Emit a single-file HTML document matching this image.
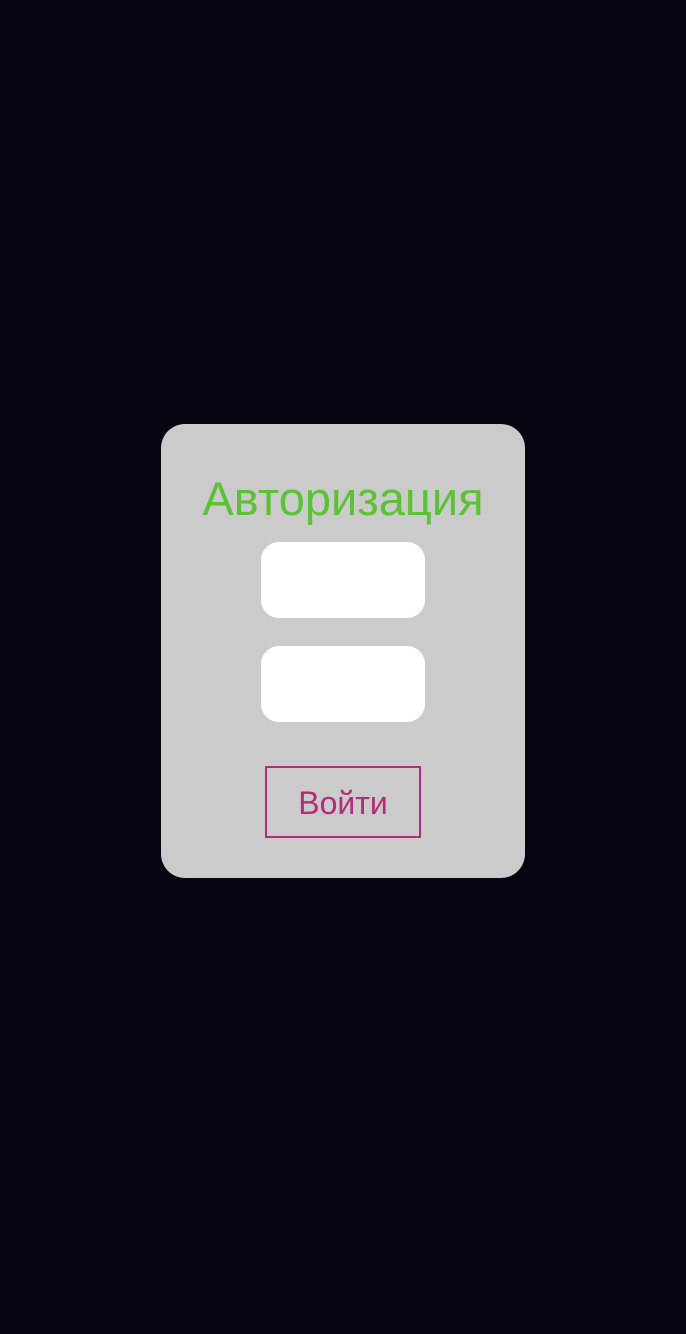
<!DOCTYPE html>
<html><head><meta charset="utf-8"><style>
body{margin:0;width:686px;height:1334px;background:#06050f;position:relative;overflow:hidden;font-family:"Liberation Sans",sans-serif}
.card{position:absolute;left:161px;top:424px;width:364px;height:454px;background:#cbcbcb;border-radius:24px}
.t{position:absolute;left:0;width:364px;top:469px;text-align:center;color:#5cc235;font-size:47px;line-height:60px}
.in{position:absolute;left:261px;width:164px;height:76px;background:#fff;border-radius:18px}
.btn{position:absolute;left:265px;top:766px;width:152px;height:68px;border:2px solid #b52a7c;color:#b52a7c;font-size:32px;line-height:70px;text-align:center}
</style></head><body>
<div class="card"></div>
<div class="t" style="left:161px">Авторизация</div>
<div class="in" style="top:542px"></div>
<div class="in" style="top:646px"></div>
<div class="btn">Войти</div>
</body></html>
